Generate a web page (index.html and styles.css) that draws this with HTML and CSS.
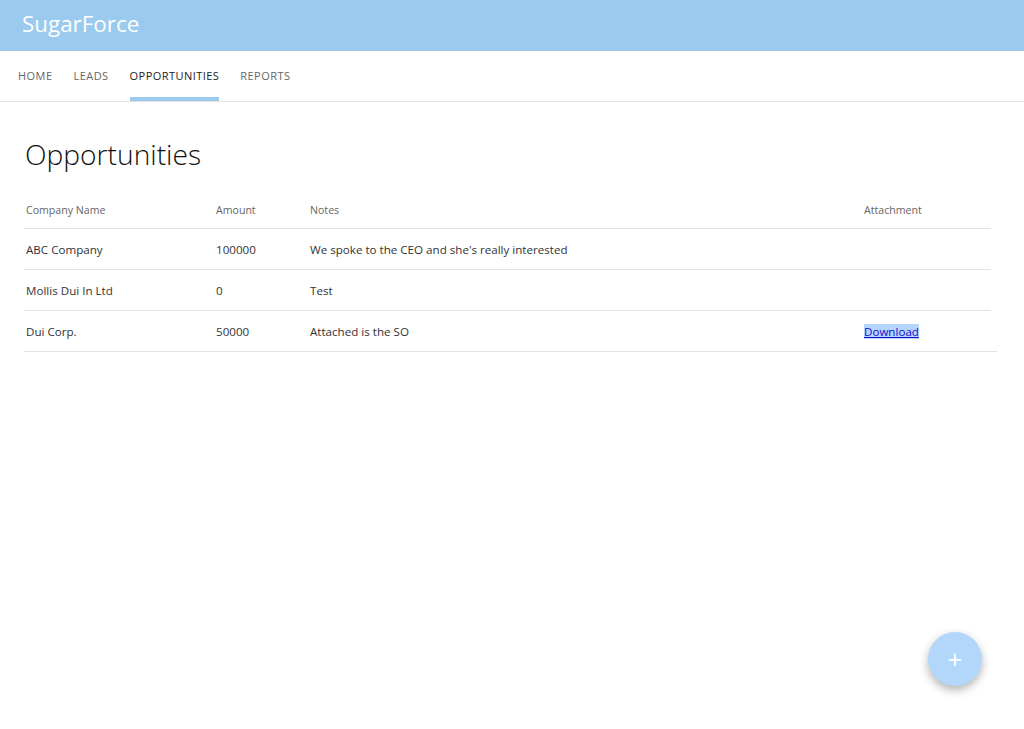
FILE: index.html
```html
<!DOCTYPE html>
<html lang="en">
<head>
    <meta charset="UTF-8">
    <meta name="viewport" content="width=device-width, initial-scale=1.0">
    <title>SugarForce - Opportunities</title>
    <link rel="stylesheet" href="styles.css">
</head>
<body>
    <header class="app-bar">
        <div class="app-title">SugarForce</div>
    </header>
    <nav class="tabs">
        <a class="tab">Home</a>
        <a class="tab">Leads</a>
        <a class="tab active">Opportunities</a>
        <a class="tab">Reports</a>
    </nav>

    <main class="page">
        <h1>Opportunities</h1>
        <div class="grid">
            <div class="row head">
                <div>Company Name</div>
                <div>Amount</div>
                <div>Notes</div>
                <div>Attachment</div>
            </div>
            <div class="row">
                <div>ABC Company</div>
                <div>100000</div>
                <div>We spoke to the CEO and she's really interested</div>
                <div></div>
            </div>
            <div class="row">
                <div>Mollis Dui In Ltd</div>
                <div>0</div>
                <div>Test</div>
                <div></div>
            </div>
            <div class="row wide">
                <div>Dui Corp.</div>
                <div>50000</div>
                <div>Attached is the SO</div>
                <div><a href="#" class="download">Download</a></div>
            </div>
        </div>
    </main>

    <button class="fab">+</button>
</body>
</html>
```

FILE: styles.css
```css
body {
    margin: 0;
    font-family: "Open Sans", Arial, sans-serif;
    color: #222;
    background: white;
}
.app-bar {
    height: 51px;
    background-color: #9acbee;
    display: flex;
    align-items: center;
    padding-left: 22px;
}
.app-title {
    color: white;
    font-size: 22.4px;
    margin-top: -4px;
}
.tabs {
    display: flex;
    padding-left: 18px;
    height: 50px;
    border-bottom: 1px solid #e2e2e2;
}
.tab {
    display: flex;
    align-items: center;
    font-size: 11px;
    text-transform: uppercase;
    letter-spacing: 0.45px;
    color: #666;
    margin-right: 21px;
    border-bottom: 4px solid transparent;
    padding-top: 3px;
}
.active {
    color: #222;
    border-bottom-color: #9acbee;
}
.page {
    padding: 0 24px;
}
h1 {
    font-weight: 300;
    font-size: 28.2px;
    margin: 33px 0 30px 1px;
    color: #111;
}
.row {
    display: grid;
    grid-template-columns: 190px 94px 554px 1fr;
    width: 967px;
    height: 40px;
    align-items: center;
    border-bottom: 1px solid #e3e3e3;
    font-size: 11.6px;
    color: #333;
}
.row > div {
    padding-left: 2px;
}
.head {
    height: 25px;
    color: #666;
    font-size: 10.6px;
    align-items: start;
}
.wide {
    width: 973px;
}
.download {
    color: #1a0dcc;
    background: #b4d5fe;
}
.fab {
    position: fixed;
    right: 42px;
    bottom: 43px;
    width: 54px;
    height: 54px;
    border-radius: 50%;
    border: none;
    background: #b3d7fb;
    color: white;
    font-size: 26px;
    font-family: "Open Sans", Arial, sans-serif;
    line-height: 54px;
    padding: 0;
    box-shadow: 0 4px 10px rgba(0,0,0,0.3);
}
```
